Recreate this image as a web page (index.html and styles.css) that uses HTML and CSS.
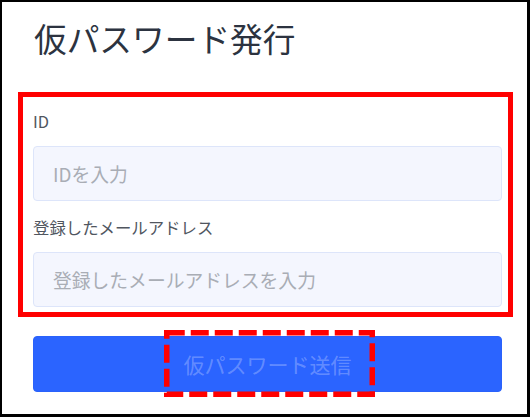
FILE: index.html
```html
<!DOCTYPE html>
<html lang="ja">
<head>
<meta charset="utf-8">
<title>仮パスワード発行</title>
<link rel="stylesheet" href="styles.css">
</head>
<body>
<div class="frame">
  <h1 class="title">仮パスワード発行</h1>
  <div class="fields">
    <div class="annot-solid"></div>
    <label class="label" for="uid">ID</label>
    <input class="input" id="uid" type="text" placeholder="IDを入力">
    <label class="label" for="mail">登録したメールアドレス</label>
    <input class="input" id="mail" type="text" placeholder="登録したメールアドレスを入力">
  </div>
  <div class="actions">
    <button class="btn" type="button">仮パスワード送信</button>
    <svg class="annot-dashed" width="211" height="67" viewBox="0 0 211 67" aria-hidden="true">
      <rect x="2.75" y="2.75" width="205.5" height="61.5" fill="none" stroke="#ff0000" stroke-width="5.5" stroke-dasharray="18 6"/>
    </svg>
  </div>
</div>
</body>
</html>
```

FILE: styles.css
```css
* { box-sizing: border-box; }
html, body { margin: 0; padding: 0; background: #fff; }
body {
  font-family: "Noto Sans CJK JP", "Noto Sans", sans-serif;
  width: 530px;
  height: 417px;
  overflow: hidden;
}
.frame {
  width: 530px;
  height: 417px;
  border-style: solid;
  border-color: #000;
  border-width: 2px 3px 3px 2px;
  padding: 16px 25px 0 31px;
  display: flex;
  flex-direction: column;
}
.title {
  margin: 0 0 0 1px;
  font-size: 32.7px;
  line-height: 40px;
  font-weight: 400;
  color: #2c3340;
}
.fields {
  position: relative;
  margin-top: 51px;
  display: flex;
  flex-direction: column;
}
.annot-solid {
  position: absolute;
  left: -15px;
  right: -11px;
  top: -17px;
  bottom: -10px;
  border: 5px solid #ff0000;
  pointer-events: none;
}
.label {
  font-size: 16.4px;
  line-height: 24px;
  color: #50565f;
  margin-bottom: 13px;
}
.input {
  height: 55px;
  width: 100%;
  margin: 0 0 14px 0;
  padding: 0 19px;
  border: 1px solid #dde5fa;
  border-radius: 4px;
  background: #f4f6fe;
  font-family: inherit;
  font-size: 18.8px;
  color: #333;
  outline: none;
}
.input:last-child { margin-bottom: 0; }
.input::placeholder { color: #a9adb5; }
.actions {
  position: relative;
  margin-top: 29px;
}
.btn {
  display: block;
  width: 100%;
  height: 56px;
  border: 1px solid #2a62fb;
  border-radius: 4px;
  background: #2b64ff;
  color: rgba(255, 255, 255, 0.27);
  font-family: inherit;
  font-size: 21px;
  padding: 0;
}
.annot-dashed {
  position: absolute;
  left: 131px;
  top: -6px;
  pointer-events: none;
}
```
